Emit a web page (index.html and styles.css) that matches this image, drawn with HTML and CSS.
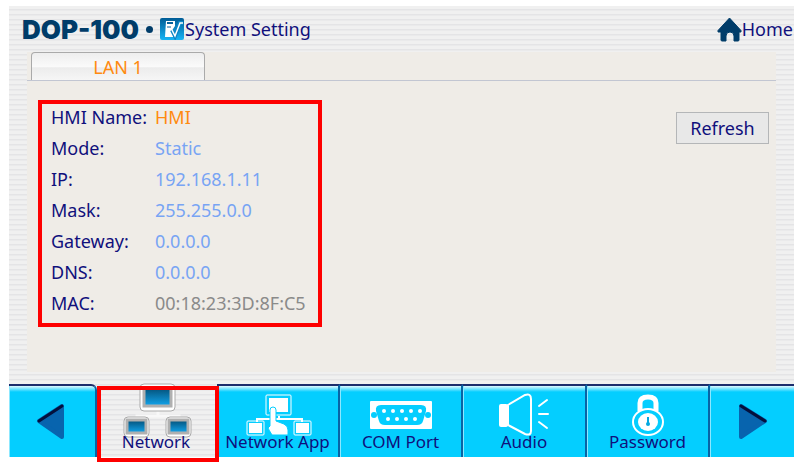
FILE: index.html
```
<!DOCTYPE html>
<html lang="en">
<head>
    <meta charset="UTF-8">
    <meta name="viewport" content="width=device-width, initial-scale=1.0">
    <title>System Setting</title>
    <link rel="stylesheet" href="styles.css">
</head>
<body>
    <div class="device">
        <header>
            <div class="logo">DOP-100<span class="dot"></span></div>
            <svg class="setting-icon" viewBox="0 0 24 22">
                <defs>
                    <linearGradient id="settingFill" x1="0" y1="0" x2="0" y2="1">
                        <stop offset="0" stop-color="#005c96"/>
                        <stop offset="1" stop-color="#18b4f4"/>
                    </linearGradient>
                </defs>
                <rect width="24" height="22" rx="2" fill="url(#settingFill)"/>
                <path d="M6 3h9v5l-2 3v8H5z" fill="#fff"/>
                <path d="M7 5h6" stroke="#08639c" stroke-width="2"/>
                <path d="M7 9h4" stroke="#08639c" stroke-width="1"/>
                <path d="M12 12l3 6L20 5h3" fill="none" stroke="#0e86c6" stroke-width="4"/>
                <path d="M12 12l3 6L20 5h3" fill="none" stroke="#fff" stroke-width="1.500"/>
            </svg>
            <h1>System Setting</h1>
            <a class="home" href="#">
                <svg viewBox="0 0 25 25">
                    <path d="M12.500 1L24 13.500v1.500h-2v8q0 1-1 1h-4v-5q0-4-4-4t-4 4v5H5q-1 0-1-1v-8H1v-1.500z" fill="#003c69" stroke="#003c69" stroke-linejoin="round"/>
                </svg>
                Home
            </a>
        </header>

        <main class="panel">
            <div class="tabs">
                <button class="tab">LAN 1</button>
            </div>
            <div class="panel-body">
                <dl class="info">
                    <dt>HMI Name:</dt><dd class="name">HMI</dd>
                    <dt>Mode:</dt><dd>Static</dd>
                    <dt>IP:</dt><dd>192.168.1.11</dd>
                    <dt>Mask:</dt><dd>255.255.0.0</dd>
                    <dt>Gateway:</dt><dd>0.0.0.0</dd>
                    <dt>DNS:</dt><dd>0.0.0.0</dd>
                    <dt>MAC:</dt><dd class="mac">00:18:23:3D:8F:C5</dd>
                </dl>
                <button class="refresh">Refresh</button>
            </div>
        </main>

        <nav class="menu">
            <button class="item arrow prev" aria-label="Previous">
                <svg viewBox="0 0 32 38">
                    <path d="M3 18L26 3v31z" fill="#0864ae" stroke="#0864ae" stroke-width="4" stroke-linejoin="round"/>
                    <path d="M3 18L26 3" stroke="#04103c" stroke-width="3" stroke-linecap="round"/>
                </svg>
            </button>
            <button class="item active">
                <svg viewBox="0 0 70 54">
                    <defs>
                        <linearGradient id="screen" x1="0" y1="0" x2="0" y2="1">
                            <stop offset="0" stop-color="#045078"/>
                            <stop offset="1" stop-color="#12a6ee"/>
                        </linearGradient>
                    </defs>
                    <path d="M37 25v5M16 34v-4h42v4" fill="none" stroke="#f8f8f8" stroke-width="3"/>
                    <g fill="#fff" stroke="#aaa">
                        <rect x="19" y="-2" width="35" height="27" rx="4"/>
                        <rect x="3" y="31" width="25" height="20" rx="4"/>
                        <rect x="45" y="31" width="25" height="20" rx="4"/>
                    </g>
                    <g fill="url(#screen)" stroke="#b0b0b0" stroke-width="3">
                        <rect x="23" y="2" width="27" height="18"/>
                        <rect x="6" y="34" width="19" height="13"/>
                        <rect x="48" y="34" width="19" height="13"/>
                    </g>
                </svg>
                <span>Network</span>
            </button>
            <button class="item">
                <svg viewBox="0 3 70 54">
                    <path d="M36 33v4M14 39v-3h45v3" fill="none" stroke="#fff" stroke-width="2"/>
                    <g fill="none" stroke="#fff">
                        <rect x="23" y="12" width="25" height="20" rx="1"/>
                        <rect x="4" y="38" width="17" height="14" rx="1"/>
                        <rect x="51" y="38" width="17" height="14" rx="1"/>
                    </g>
                    <path d="M26 15h19v14H26zM6 40h13v10H6zM53 40h13v10H53z" fill="#fff"/>
                    <path d="M27 27q0-3 3-3t3 3v11l8 3q4 2 4 6v5H29q-3-5-4-7l2-2z" fill="#fff" stroke="#04ceff"/>
                </svg>
                <span>Network App</span>
            </button>
            <button class="item">
                <svg viewBox="0 3 70 54">
                    <rect x="4" y="18" width="62" height="28" rx="1" fill="#fff"/>
                    <path d="M15 22h40q6 0 5 6l-3 10q-1 4-6 4H19q-5 0-6-4l-3-10q-1-6 5-6z" fill="#04ceff"/>
                    <g fill="#04ceff"><circle cx="8" cy="32" r="3"/><circle cx="62" cy="32" r="3"/></g>
                    <g fill="#fff">
                        <circle cx="18" cy="28" r="2"/><circle cx="27" cy="28" r="2"/><circle cx="36" cy="28" r="2"/><circle cx="45" cy="28" r="2"/><circle cx="54" cy="28" r="2"/>
                        <circle cx="22" cy="36" r="2"/><circle cx="31" cy="36" r="2"/><circle cx="40" cy="36" r="2"/><circle cx="49" cy="36" r="2"/>
                    </g>
                </svg>
                <span>COM Port</span>
            </button>
            <button class="item">
                <svg viewBox="0 3 70 54">
                    <rect x="10" y="21" width="9" height="23" rx="2" fill="#fff"/>
                    <path d="M19 22l17-10q6-2 6 4v32q0 5-6 3L19 42z" fill="none" stroke="#fff" stroke-width="2"/>
                    <path d="M50 23l8-6M50 31h9M50 39l8 6" stroke="#fff" stroke-width="2" stroke-linecap="round"/>
                </svg>
                <span>Audio</span>
            </button>
            <button class="item">
                <svg viewBox="0 3 70 54">
                    <path d="M27 28V20q0-6 8-6t8 6v8" fill="none" stroke="#fff" stroke-width="5"/>
                    <ellipse cx="35" cy="39" rx="15" ry="13" fill="#04ceff" stroke="#fff" stroke-width="2"/>
                    <ellipse cx="35" cy="39" rx="10" ry="9" fill="#fff"/>
                    <path d="M35 34v6" stroke="#04a8e0" stroke-width="2"/>
                    <circle cx="35" cy="41" r="2" fill="#04a8e0"/>
                </svg>
                <span>Password</span>
            </button>
            <button class="item arrow next" aria-label="Next">
                <svg viewBox="0 0 32 38">
                    <path d="M29 18L5 3v31z" fill="#0864ae" stroke="#0864ae" stroke-width="4" stroke-linejoin="round"/>
                    <path d="M29 18L5 3" stroke="#04103c" stroke-width="3" stroke-linecap="round"/>
                </svg>
            </button>
        </nav>
    </div>
</body>
</html>
```
FILE: styles.css
```
* { box-sizing: border-box; }
body { margin: 0; padding: 6px 6px 5px 9px; background: #fff; font-family: "Noto Sans", sans-serif; font-size: 18px; color: #10107c; }
button { font: inherit; color: inherit; padding: 0; margin: 0; cursor: pointer; }
.device { background: repeating-linear-gradient(#f0f0f0 0 3px, #e4e4e6 3px 4px, #eaeaeb 4px 5px); }

header { display: flex; align-items: center; height: 46px; padding: 0 1px 0 13px; }
.logo { display: flex; align-items: center; font-family: "Inter", sans-serif; font-weight: 900; font-size: 26px; color: #003c69; }
.dot { width: 7px; height: 7px; margin: 0 7px 0 7px; border-radius: 50%; background: #003c69; }
.setting-icon { width: 24px; height: 22px; }
h1 { margin: 0; padding-left: 1px; font-size: 18px; font-weight: 400; }
.home { display: flex; align-items: center; margin-left: auto; color: inherit; text-decoration: none; }
.home svg { width: 25px; height: 25px; }

/* LAN panel */
.panel { margin: 0 18px 0 18px; background: #efece7; }
.tabs { padding-left: 4px; border-bottom: 1px solid #c2c6d2; }
.tab { display: block; width: 174px; height: 28px; border: 1px solid #aaa; border-bottom: none; border-radius: 4px 4px 0 0; background: linear-gradient(#eee, #fafafa 50%, #ececec 55%, #f6f6f6); color: #ff8a10; }
.panel-body { display: flex; justify-content: space-between; align-items: flex-start; padding: 19px 7px 45px 11px; }
.info { display: grid; grid-template-columns: 104px auto; row-gap: 5px; width: 284px; margin: 0; padding: 0 0 7px 9px; border: 4px solid #fe0000; line-height: 26px; white-space: nowrap; }
.info dd { margin: 0; color: #78a4f4; }
.info .name { color: #ff8a10; }
.info .mac { color: #8a8a8a; }
.refresh { width: 93px; height: 32px; margin-top: 12px; border: 1px solid #b4b6b8; background: #e8e8e8; }

/* bottom menu */
.menu { display: grid; grid-template-columns: 88fr 120fr 123fr 123fr 124fr 123fr 84fr; margin-top: 12px; }
.item { position: relative; display: flex; flex-direction: column; align-items: center; height: 73px; border: none; border-top: 2px solid #1c2c6c; border-right: 2px solid #0864a4; background: linear-gradient(#dff8ff, #04ceff 6px); box-shadow: inset 1px 0 #8ce8ff; font-size: 17px; white-space: nowrap; }
.item svg { width: 70px; height: 54px; flex: none; overflow: visible; }
.item span { position: relative; margin-top: -10px; line-height: 24px; }
.item.arrow { justify-content: center; }
.item.arrow svg { width: 32px; height: 38px; }
.prev { border-top-right-radius: 6px; }
.next { border-right: none; }
.active { z-index: 1; border-color: transparent; background: none; box-shadow: none; }
/* selection frame lies over the neighbouring cells */
.active::after { content: ""; position: absolute; top: 0; left: 0; right: -4px; bottom: -5px; border: 4px solid #fe0000; }
```
